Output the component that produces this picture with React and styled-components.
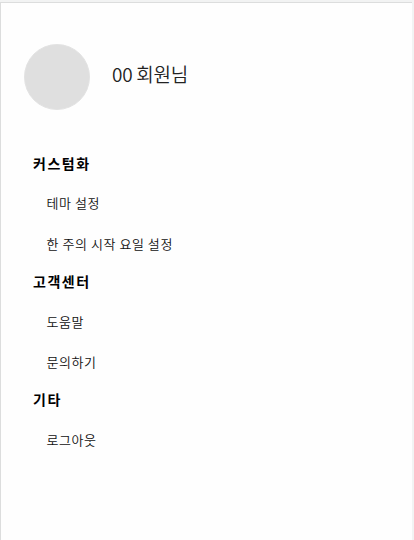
import React from "react";
import styled, { createGlobalStyle } from "styled-components";

const GlobalStyle = createGlobalStyle`
	body {
		margin: 0;
		background: #f2f3f3;
		font-family: "Noto Sans CJK KR", sans-serif;
	}
`;

const Page = styled.main`
	box-sizing: border-box;
	height: 538px;
	margin: 2px 2px 0 0;
	border-top: 1px solid #dcdddd;
	border-left: 1px solid #dcdddd;
	background: #fefefe;
	overflow: hidden;
`;

const Profile = styled.header`
	display: flex;
	align-items: center;
	gap: 22px;
	padding: 41px 0 0 23px;
`;

const Avatar = styled.div`
	box-sizing: border-box;
	width: 66px;
	height: 66px;
	border: 1px solid #e3e3e3;
	border-radius: 50%;
	background: #dfdfdf;
`;

const UserName = styled.p`
	margin: 0 0 6px;
	color: #222222;
	font-size: 19px;
	font-weight: 350;
	line-height: 28px;
	letter-spacing: -0.25px;
	white-space: pre;
`;

const Menu = styled.nav`
	padding: 42px 0 0 32px;
`;

const Section = styled.section`
	margin-bottom: 6.25px;
`;

const SectionTitle = styled.h2`
	margin: 0 0 9.45px;
	color: #000000;
	font-size: 14px;
	font-weight: 700;
	line-height: 22px;
	letter-spacing: 1.5px;
`;

const MenuList = styled.ul`
	margin: 0;
	padding: 0 0 0 13.5px;
	list-style: none;
`;

const MenuItem = styled.li`
	height: 40.2px;
	color: #111111;
	font-size: 13px;
	font-weight: 350;
	line-height: 40px;
	letter-spacing: 0.55px;
`;

const sections = [
	{ title: "커스텀화", items: ["테마 설정", "한 주의 시작 요일 설정"] },
	{ title: "고객센터", items: ["도움말", "문의하기"] },
	{ title: "기타", items: ["로그아웃"] },
];

const App = () => {
	return (
		<>
			<GlobalStyle />
			<Page>
				<Profile>
					<Avatar />
					<UserName>00 회원님</UserName>
				</Profile>
				<Menu>
					{sections.map(({ title, items }) => (
						<Section key={title}>
							<SectionTitle>{title}</SectionTitle>
							<MenuList>
								{items.map((item) => (
									<MenuItem key={item}>{item}</MenuItem>
								))}
							</MenuList>
						</Section>
					))}
				</Menu>
			</Page>
		</>
	);
};

export default App;
